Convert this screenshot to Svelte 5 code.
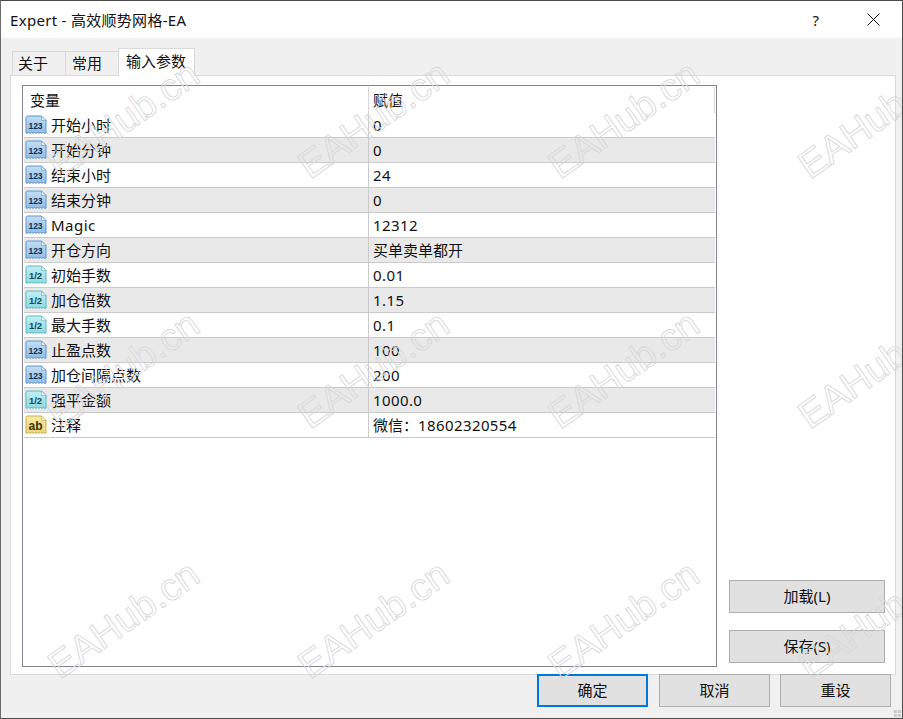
<script>
  const rows = [
    ['i', '开始小时', '', '0'], ['i', '开始分钟', '', '0'], ['i', '结束小时', '', '24'], ['i', '结束分钟', '', '0'],
    ['i', 'Magic', '', '12312'], ['i', '开仓方向', '买单卖单都开', ''], ['f', '初始手数', '', '0.01'], ['f', '加仓倍数', '', '1.15'],
    ['f', '最大手数', '', '0.1'], ['i', '止盈点数', '', '100'], ['i', '加仓间隔点数', '', '200'], ['f', '强平金额', '', '1000.0'],
    ['s', '注释', '微信：', '18602320554']
  ];
  const icon = {
    i: { top: '#c3def5', bottom: '#8fbce6', edge: '#5e95cb', label: '123', fg: '#0f2f55' },
    f: { top: '#c2eff2', bottom: '#8cd9e2', edge: '#5ab8c8', label: '1/2', fg: '#0f4a58' },
    s: { top: '#f8eba8', bottom: '#ecd477', edge: '#c9ad4e', label: 'ab', fg: '#3d3206' }
  };
  const marks = [];
  for (const y of [180, 430, 680]) for (const x of [60, 310, 560, 810]) marks.push({ x, y });
</script>

<div class="window">
  <header class="title">
    <span class="caption">Expert - 高效顺势网格-EA</span>
    <span class="help">?</span>
    <svg class="close" width="13" height="13" viewBox="0 0 13 13"><path d="M.5.5l12 12M12.5.5l-12 12" stroke="#111" fill="none"/></svg>
  </header>

  <nav class="tabs">
    <div class="tab">关于</div>
    <div class="tab">常用</div>
    <div class="tab active">输入参数</div>
  </nav>

  <section class="panel">
    <div class="table">
      <div class="row head"><div class="name">变量</div><div class="value">赋值</div></div>
      <svg width="0" height="0" class="defs">
        <defs>
          {#each Object.entries(icon) as [k, c]}
            <linearGradient id="g-{k}" x1="0" y1="0" x2="0" y2="1"><stop offset="0" stop-color={c.top}/><stop offset="1" stop-color={c.bottom}/></linearGradient>
          {/each}
        </defs>
      </svg>
      {#each rows as [kind, name, text, num], i}
        <div class="row" class:alt={i % 2 === 1}>
          <div class="name">
            <svg class="icon" width="22" height="20" viewBox="0 0 22 20">
              <path d="M1 2.500q0-1.500 1.500-1.500h14l4.500 4.500v12.500q-1 1-2.500-.5q-1.500 1.500-3 0q-1.500 1.500-3 0q-1.500 1.500-3 0q-1.500 1.500-3 0q-1.500 1.500-3 0q-1.500 1.200-2.500.5z" fill="url(#g-{kind})" stroke={icon[kind].edge}/>
              <path d="M16.500 1v4.500h4.500z" fill="#eef6fb" stroke={icon[kind].edge} stroke-width=".6"/>
              <text x="10.500" y={kind === 's' ? 14.500 : 13.500} text-anchor="middle" font-size={kind === 's' ? 12 : kind === 'i' ? 8.500 : 9.500} font-weight="700" fill={icon[kind].fg}>{icon[kind].label}</text>
            </svg>
            <span class:latin={name === 'Magic'}>{name}</span>
          </div>
          <div class="value">{text}<span class="num">{num}</span></div>
        </div>
      {/each}
    </div>
    <aside class="side">
      <button>加载(L)</button>
      <button>保存(S)</button>
    </aside>
  </section>

  <footer class="actions">
    <button class="primary">确定</button>
    <button>取消</button>
    <button>重设</button>
  </footer>

  <svg class="grip" width="7" height="7" viewBox="0 0 7 7"><path d="M0 0h3v3H0zM4 0h3v3H4zM0 4h3v3H0zM4 4h3v3H4z" fill="#c9c9c9"/></svg>

  <svg class="marks" width="903" height="719">
    {#each marks as m}
      <text x={m.x} y={m.y} transform="rotate(-35 {m.x} {m.y})">EAHub.cn</text>
    {/each}
  </svg>
</div>

<style>
  :global(body) { margin: 0; }
  .window {
    position: relative;
    box-sizing: border-box;
    width: 903px;
    height: 719px;
    overflow: hidden;
    background: #f0f0f0;
    border: 1px solid #4a4a4a;
    border-left-color: #6b6b6b;
    font: 15px/20px "Noto Sans", "Noto Sans CJK SC", sans-serif;
    color: #111;
  }
  .title {
    display: flex;
    align-items: center;
    height: 37px;
    padding-left: 9px;
    background: #fff;
  }
  .caption { letter-spacing: .3px; }
  .help { margin-left: auto; margin-right: 48px; }
  .close { margin-right: 22px; }
  .tabs {
    display: flex;
    align-items: flex-end;
    height: 37px;
    padding-left: 11px;
  }
  .tab {
    box-sizing: border-box;
    width: 54px;
    height: 24px;
    padding: 1px 0 0 5px;
    border: 1px solid #d9d9d9;
    border-bottom: none;
    margin-right: -1px;
  }
  .tab + .tab { padding-left: 6px; }
  .tab.active {
    position: relative;
    width: 77px;
    height: 28px;
    padding: 2px 0 0 7px;
    margin-bottom: -1px;
    background: #fff;
  }
  .panel {
    display: flex;
    box-sizing: border-box;
    width: 886px;
    height: 600px;
    margin-left: 9px;
    padding: 9px 10px 7px 11px;
    background: #fff;
    border: 1px solid #d9d9d9;
  }
  .table {
    box-sizing: border-box;
    width: 695px;
    height: 582px;
    border: 1px solid #83838f;
    padding: 1px;
    background: #fff;
  }
  .defs { position: absolute; }
  .row {
    display: grid;
    grid-template-columns: 345px 1fr;
    height: 25px;
    box-sizing: border-box;
    border-bottom: 1px solid #cacaca;
  }
  .row.head { height: 26px; border-bottom: 0; }
  .row.alt { background: #e9e9e9; }
  .name {
    display: flex;
    align-items: center;
    gap: 4px;
    padding-left: 1px;
    border-right: 1px solid #cacaca;
    white-space: nowrap;
  }
  .latin { letter-spacing: .5px; }
  .head .name { padding-left: 6px; border-right-color: #d8d8d8; }
  .head .value { border-right: 1px solid #d8d8d8; }
  .value { display: flex; align-items: center; padding-left: 4px; }
  .num { letter-spacing: .4px; }
  .icon { flex: none; font-family: "Liberation Sans", sans-serif; }
  .side {
    display: flex;
    flex-direction: column;
    justify-content: flex-end;
    gap: 17px;
    margin-left: 12px;
    padding-bottom: 4px;
  }
  button {
    box-sizing: border-box;
    width: 111px;
    height: 33px;
    padding: 0 0 2px;
    background: #e1e1e1;
    border: 1px solid #adadad;
    border-radius: 0;
    font: inherit;
    color: #111;
  }
  .side button { width: 156px; }
  .actions {
    display: flex;
    justify-content: flex-end;
    gap: 10px;
    padding-right: 11px;
    margin-top: -1px;
  }
  .actions button.primary { border: 2px solid #0078d7; margin-right: 1px; }
  .grip { position: absolute; right: 1px; bottom: 1px; }
  .marks { position: absolute; left: -1px; top: -1px; pointer-events: none; }
  .marks text {
    font: 38.500px "Liberation Sans", sans-serif;
    fill: none;
    stroke: #d8d8d8;
    stroke-width: .9;
  }
</style>
